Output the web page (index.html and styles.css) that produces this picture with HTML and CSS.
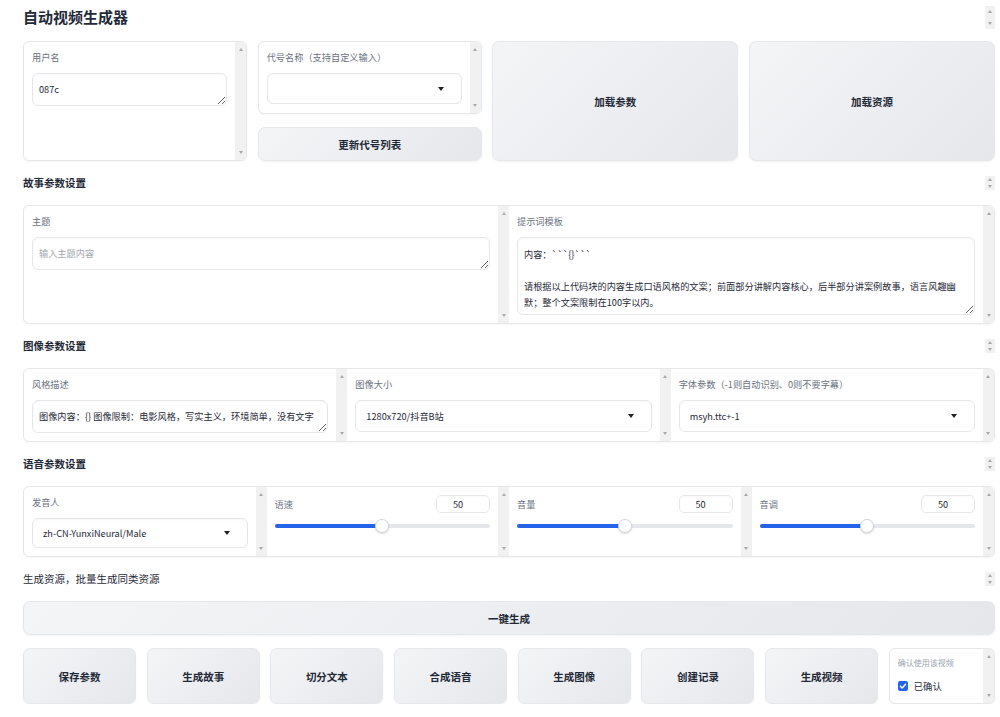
FILE: index.html
```html
<!DOCTYPE html>
<html lang="zh">
<head>
<meta charset="utf-8">
<title>自动视频生成器</title>
<link rel="stylesheet" href="styles.css">
</head>
<body>
<main class="app">
  <header class="head head-title">
    <h1 class="title">自动视频生成器</h1>
    <div class="mini-scroll tall"><i class="up"></i><i class="down"></i></div>
  </header>

  <section class="row1">
    <div class="box">
      <div class="content">
        <div class="label">用户名</div>
        <textarea class="input one">087c</textarea>
      </div>
      <div class="strip"><i class="up"></i><i class="down"></i></div>
    </div>
    <div class="col2">
      <div class="box box-short">
        <div class="content">
          <div class="label">代号名称（支持自定义输入）</div>
          <div class="select"><span></span><i class="caret"></i></div>
        </div>
        <div class="strip"><i class="up"></i><i class="down"></i></div>
      </div>
      <button class="btn btn-mid">更新代号列表</button>
    </div>
    <button class="btn btn-big">加载参数</button>
    <button class="btn btn-big">加载资源</button>
  </section>

  <header class="head">
    <h2 class="sec">故事参数设置</h2>
    <div class="mini-scroll"><i class="up"></i><i class="down"></i></div>
  </header>

  <section class="panel panel-story">
    <div class="pcell">
      <div class="content">
        <div class="label">主题</div>
        <textarea class="input one" placeholder="输入主题内容"></textarea>
      </div>
      <div class="strip"><i class="up"></i><i class="down"></i></div>
    </div>
    <div class="pcell">
      <div class="content">
        <div class="label">提示词模板</div>
        <textarea class="input multi">内容：&#96;&#96;&#96;{}&#96;&#96;&#96;

请根据以上代码块的内容生成口语风格的文案；前面部分讲解内容核心，后半部分讲案例故事，语言风趣幽默；整个文案限制在100字以内。</textarea>
      </div>
      <div class="strip"><i class="up"></i><i class="down"></i></div>
    </div>
  </section>

  <header class="head">
    <h2 class="sec">图像参数设置</h2>
    <div class="mini-scroll"><i class="up"></i><i class="down"></i></div>
  </header>

  <section class="panel">
    <div class="pcell">
      <div class="content">
        <div class="label">风格描述</div>
        <textarea class="input one nowrap">图像内容：{} 图像限制：电影风格，写实主义，环境简单，没有文字</textarea>
      </div>
      <div class="strip"><i class="up"></i><i class="down"></i></div>
    </div>
    <div class="pcell">
      <div class="content">
        <div class="label">图像大小</div>
        <div class="select sel-32"><span>1280x720/抖音B站</span><i class="caret"></i></div>
      </div>
      <div class="strip"><i class="up"></i><i class="down"></i></div>
    </div>
    <div class="pcell">
      <div class="content">
        <div class="label">字体参数（-1则自动识别、0则不要字幕）</div>
        <div class="select sel-32"><span>msyh.ttc+-1</span><i class="caret"></i></div>
      </div>
      <div class="strip"><i class="up"></i><i class="down"></i></div>
    </div>
  </section>

  <header class="head">
    <h2 class="sec">语音参数设置</h2>
    <div class="mini-scroll"><i class="up"></i><i class="down"></i></div>
  </header>

  <section class="panel panel-voice">
    <div class="pcell">
      <div class="content">
        <div class="label">发音人</div>
        <div class="select"><span>zh-CN-YunxiNeural/Male</span><i class="caret"></i></div>
      </div>
      <div class="strip"><i class="up"></i><i class="down"></i></div>
    </div>
    <div class="pcell">
      <div class="content">
        <div class="slider-head"><span class="label flat">语速</span><span class="num">50</span></div>
        <div class="slider"><div class="track"><div class="fill" style="width:50%"></div></div><div class="thumb" style="left:50%"></div></div>
      </div>
      <div class="strip"><i class="up"></i><i class="down"></i></div>
    </div>
    <div class="pcell">
      <div class="content">
        <div class="slider-head"><span class="label flat">音量</span><span class="num">50</span></div>
        <div class="slider"><div class="track"><div class="fill" style="width:50%"></div></div><div class="thumb" style="left:50%"></div></div>
      </div>
      <div class="strip"><i class="up"></i><i class="down"></i></div>
    </div>
    <div class="pcell">
      <div class="content">
        <div class="slider-head"><span class="label flat">音调</span><span class="num">50</span></div>
        <div class="slider"><div class="track"><div class="fill" style="width:50%"></div></div><div class="thumb" style="left:50%"></div></div>
      </div>
      <div class="strip"><i class="up"></i><i class="down"></i></div>
    </div>
  </section>

  <header class="head">
    <h2 class="sec sec-light">生成资源，批量生成同类资源</h2>
    <div class="mini-scroll"><i class="up"></i><i class="down"></i></div>
  </header>

  <button class="btn btn-wide">一键生成</button>

  <section class="row-actions">
    <button class="btn btn-act">保存参数</button>
    <button class="btn btn-act">生成故事</button>
    <button class="btn btn-act">切分文本</button>
    <button class="btn btn-act">合成语音</button>
    <button class="btn btn-act">生成图像</button>
    <button class="btn btn-act">创建记录</button>
    <button class="btn btn-act">生成视频</button>
    <div class="box box-check">
      <div class="content">
        <div class="label small">确认使用该视频</div>
        <label class="check">
          <span class="checkbox"><svg viewBox="0 0 10 10" width="10" height="10"><path d="M2.4 5.2 L4.2 7 L7.6 3.2" fill="none" stroke="#fff" stroke-width="1.4" stroke-linecap="round" stroke-linejoin="round"/></svg></span>
          <span>已确认</span>
        </label>
      </div>
      <div class="strip"><i class="up"></i><i class="down"></i></div>
    </div>
  </section>
</main>
</body>
</html>
```

FILE: styles.css
```css
* { box-sizing: border-box; }

body {
  margin: 0;
  background: #ffffff;
  font-family: "Noto Sans CJK SC", "Noto Sans", sans-serif;
  color: #1f2937;
}

.app {
  padding: 4px 5px 0 23px;
  display: flex;
  flex-direction: column;
  gap: 10px;
}

/* headers */
.head {
  height: 24px;
  display: flex;
  align-items: center;
  justify-content: space-between;
}
.head-title {
  height: 26px;
  margin-bottom: 1px;
}
.title {
  margin: 0;
  font-size: 15px;
  line-height: 26px;
  font-weight: 700;
  color: #1f2937;
}
.sec {
  margin: 0;
  font-size: 10.5px;
  line-height: 24px;
  font-weight: 700;
  color: #1f2937;
}
.sec-light { font-weight: 400; }

/* scrollbar look-alikes */
.mini-scroll, .strip {
  background: #f1f1f1;
  display: flex;
  flex-direction: column;
  justify-content: space-between;
  align-items: center;
}
.mini-scroll {
  width: 10px;
  height: 14px;
  padding: 2px 0;
}
.mini-scroll.tall { height: 23px; padding: 4px 0; }
.strip {
  width: 11px;
  flex: 0 0 11px;
  padding: 6px 0 6px;
}
.up, .down {
  display: block;
  width: 0;
  height: 0;
  border-left: 2.5px solid transparent;
  border-right: 2.5px solid transparent;
}
.up { border-bottom: 3px solid #a9a9a9; }
.down { border-top: 3px solid #a9a9a9; }

/* boxes */
.box, .panel {
  display: flex;
  background: #fff;
  border: 1px solid #e5e7eb;
  border-radius: 6px;
  overflow: hidden;
  box-shadow: 0 1px 2px rgba(0, 0, 0, 0.04);
}
.content {
  flex: 1;
  min-width: 0;
  padding: 8px;
}
.pcell {
  flex: 1;
  display: flex;
  min-width: 0;
}

.label {
  font-size: 9.2px;
  line-height: 14px;
  color: #6b7280;
  margin-bottom: 9px;
  white-space: nowrap;
}
.label.flat { margin-bottom: 0; }
.label.small {
  font-size: 8px;
  line-height: 12px;
  color: #9ca3af;
  margin-bottom: 10px;
}

/* inputs */
.input {
  display: block;
  width: 100%;
  font-family: "Noto Sans CJK SC", "Noto Sans", sans-serif;
  font-size: 9.2px;
  line-height: 15px;
  color: #1f2937;
  background: #fff;
  border: 1px solid #e5e7eb;
  border-radius: 6px;
  padding: 8px 8px 8px 6px;
  margin: 0;
  resize: vertical;
  overflow: hidden;
  outline: none;
  box-shadow: inset 0 1px 2px rgba(0, 0, 0, 0.03);
}
.input::placeholder { color: #a3a8b0; }
.input.one { height: 33px; }
.input.multi { height: 78px; line-height: 16px; padding-right: 10px; }
.input.nowrap { white-space: pre; }

.select {
  height: 31px;
  display: flex;
  align-items: center;
  justify-content: space-between;
  padding: 0 17px 0 10px;
  font-size: 9.2px;
  color: #1f2937;
  border: 1px solid #e5e7eb;
  border-radius: 6px;
  box-shadow: inset 0 1px 2px rgba(0, 0, 0, 0.03);
}
.select.sel-32 { height: 32px; }
.panel-voice .select { height: 30px; }
.caret {
  display: block;
  width: 0;
  height: 0;
  border-left: 3px solid transparent;
  border-right: 3px solid transparent;
  border-top: 4px solid #222;
}

/* row 1 */
.row1 {
  display: grid;
  grid-template-columns: 224px 224px 1fr 1fr;
  column-gap: 10.67px;
  height: 120px;
}
.col2 {
  display: flex;
  flex-direction: column;
  justify-content: space-between;
}
.box-short { height: 73px; }

/* buttons */
.btn {
  font-family: "Noto Sans CJK SC", "Noto Sans", sans-serif;
  font-size: 10.5px;
  font-weight: 700;
  color: #1f2937;
  background: linear-gradient(135deg, #f4f5f7 0%, #e6e7eb 100%);
  border: 1px solid #e5e7eb;
  border-radius: 7px;
  box-shadow: 0 1px 2px rgba(0, 0, 0, 0.05);
  padding: 0;
  margin: 0;
  cursor: pointer;
}
.btn-mid { height: 34px; }
.btn-big { height: 120px; }
.btn-wide { height: 34px; width: 100%; }

/* panels */
.panel-story { height: 119px; }

/* sliders */
.slider-head {
  height: 18px;
  display: flex;
  align-items: center;
  justify-content: space-between;
}
.num {
  width: 54px;
  height: 18px;
  border: 1px solid #e5e7eb;
  border-radius: 5px;
  font-size: 9.2px;
  line-height: 16px;
  text-align: center;
  padding-right: 10px;
  color: #1f2937;
  box-shadow: inset 0 1px 2px rgba(0, 0, 0, 0.03);
}
.slider {
  position: relative;
  height: 14px;
  margin-top: 6px;
  display: flex;
  align-items: center;
}
.track {
  width: 100%;
  height: 4px;
  border-radius: 2px;
  background: #e5e7eb;
  overflow: hidden;
}
.fill {
  height: 100%;
  background: #2563eb;
}
.thumb {
  position: absolute;
  top: 0;
  width: 14px;
  height: 14px;
  margin-left: -7px;
  border-radius: 50%;
  background: #fff;
  border: 1px solid #d1d5db;
  box-shadow: 0 1px 2px rgba(0, 0, 0, 0.15);
}

/* bottom actions */
.row-actions {
  display: flex;
  gap: 10.7px;
  height: 56px;
  margin-top: 3px;
}
.btn-act {
  flex: 0 0 113px;
  height: 56px;
}
.box-check {
  flex: 1;
  height: 56px;
}
.check {
  display: flex;
  align-items: center;
  gap: 6px;
  font-size: 9.3px;
  line-height: 14px;
  color: #1f2937;
}
.checkbox {
  width: 10px;
  height: 10px;
  border-radius: 2px;
  background: #2563eb;
  display: flex;
}
```
